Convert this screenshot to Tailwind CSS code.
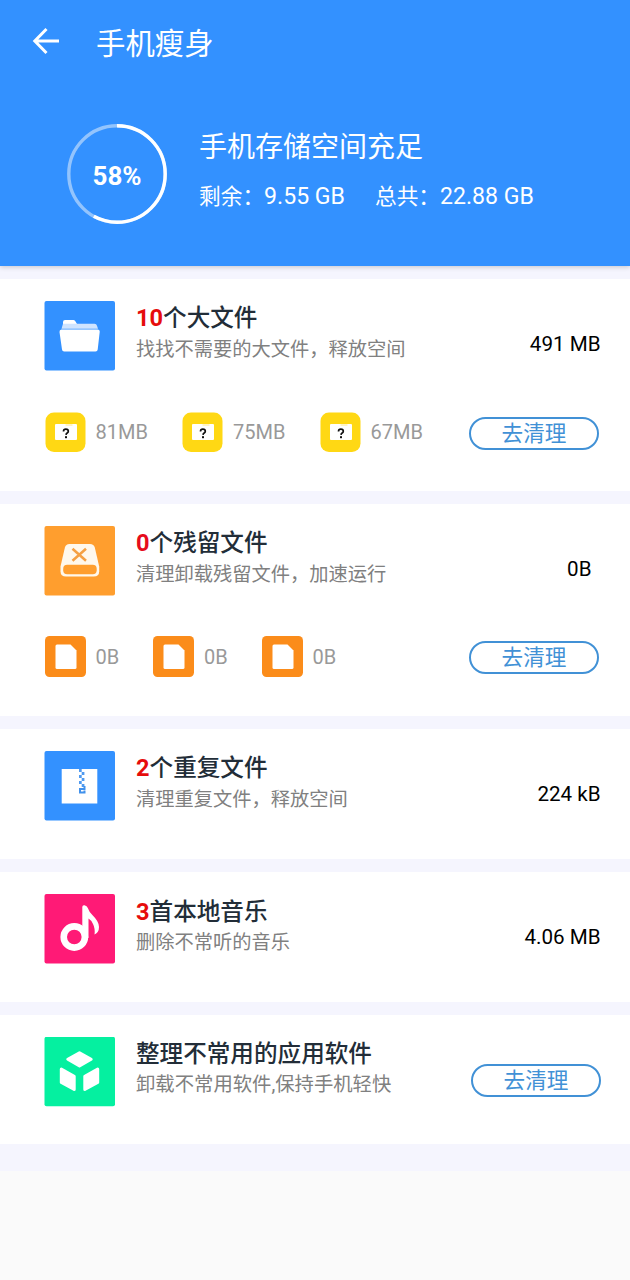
<!DOCTYPE html>
<html lang="zh-CN">
<head>
<meta charset="utf-8">
<meta name="viewport" content="width=device-width, initial-scale=1">
<title>手机瘦身</title>
<script src="https://cdn.jsdelivr.net/npm/@tailwindcss/browser@4"></script>
</head>
<body class="bg-[#fafafa] font-['Roboto','Noto_Sans_CJK_SC',sans-serif] text-black">
<svg class="hidden">
  <symbol id="unknown" viewBox="0 0 41 40">
    <rect x=".5" y=".5" width="40" height="39.500" rx="8.500" fill="#ffd814"/>
    <path d="M10 13q0-1 1-1h20q1 0 1 1V27q0 1-1 1H11q-1 0-1-1z" fill="#fff"/>
    <path d="M20.500 13h7" stroke="#ffe98a" stroke-width="1"/>
    <path d="M18.500 19.400q0-2.300 2.400-2.300t2.400 2.100q0 1.100-1.100 1.800t-1.200 1.900" fill="none" stroke="#111" stroke-width="1.700"/>
    <rect x="20" y="24.200" width="2" height="2" fill="#111"/>
  </symbol>
  <symbol id="doc" viewBox="0 0 41 41">
    <rect width="41" height="41" rx="4.500" fill="#fb8c1a"/>
    <path d="M10.500 10q0-1.500 1.500-1.500h13.500l6 6V31.500q0 1.500-1.500 1.500H12q-1.500 0-1.500-1.500z" fill="#fff"/>
  </symbol>
</svg>

<header class="relative flex h-[266px] flex-col bg-[#3391ff] text-white shadow-[0_1px_5px_rgba(0,0,0,0.2)]">
  <div class="flex h-[84px] items-center pl-8">
    <svg class="h-7 w-7 -translate-y-px" viewBox="0 0 28 28" fill="none" stroke="#fff" stroke-width="3"><path d="M27 14H3M14.500 2L2.800 14l11.700 12"/></svg>
    <h1 class="pl-9 pt-[3px] text-[29.400px] leading-[40px]">手机瘦身</h1>
  </div>
  <div class="flex pl-[67px] pt-10">
    <div class="relative flex h-[100px] w-[100px] items-center justify-center">
      <svg class="absolute inset-0" viewBox="0 0 100 100" fill="none" stroke-width="3.400">
        <circle cx="50" cy="50" r="48.200" stroke="#93c4fd"/>
        <circle cx="50" cy="50" r="48.200" stroke="#fff" pathLength="100" stroke-dasharray="58 42" transform="rotate(-90 50 50)"/>
      </svg>
      <span class="pt-[5px] text-[26px] font-bold">58%</span>
    </div>
    <div class="pl-8">
      <p class="pt-1 text-[28px] leading-[40px]">手机存储空间充足</p>
      <p class="flex gap-[30px] pt-[13px] text-[23.100px] leading-[32px]"><span><span class="text-[21.700px]">剩余：</span>9.55 GB</span><span><span class="text-[21.700px]">总共：</span>22.88 GB</span></p>
    </div>
  </div>
</header>

<main class="flex h-[905px] flex-col gap-[13px] bg-[#f5f5fe] pt-[13px]">
  <section class="h-[212px] bg-white pl-11 pt-[22px]">
    <div class="flex h-[70px]">
      <svg class="h-[70px] w-[71px]" viewBox="0 0 71 70"><rect x=".5" width="70.500" height="69.500" rx="2" fill="#3391ff"/><path d="M19 24v-3q0-2 2-2h8.500q1.500 0 2 1.500L33 23z" fill="#fff"/><path d="M19 22.800h31.500q2 0 2.500 2l1 3H17.500z" fill="#cfe4ff"/><path d="M17.500 28.500h36q2.500 0 2.200 2.500L53.700 48.500q-.2 2-2.200 2H20.200q-2 0-2.200-2L15.500 31Q15.300 28.500 17.500 28.500z" fill="#fff"/></svg>
      <div class="grow pl-[21px] pt-0.5">
        <h2 class="text-[23.600px] font-medium leading-[30px] text-[#222d38]"><b class="text-[#e60c0c]">10</b>个大文件</h2>
        <p class="pt-0.5 text-[19.250px] leading-[30px] text-[#808080]">找找不需要的大文件，释放空间</p>
      </div>
      <span class="pr-[29.500px] pt-[27px] text-[20.600px] leading-[32px]">491 MB</span>
    </div>
    <div class="mt-[41px] flex h-[40px] items-center text-[20px] text-[#999]">
      <div class="flex w-[137.500px] items-center gap-[10px]"><svg class="ml-[.5px] h-10 w-[41px]"><use href="#unknown"/></svg>81MB</div>
      <div class="flex w-[137.500px] items-center gap-[10px]"><svg class="ml-[.5px] h-10 w-[41px]"><use href="#unknown"/></svg>75MB</div>
      <div class="flex w-[137.500px] items-center gap-[10px]"><svg class="ml-[.5px] h-10 w-[41px]"><use href="#unknown"/></svg>67MB</div>
      <button class="ml-[12.500px] mt-0.5 h-[33px] w-[130px] rounded-full border-2 border-[#4191d6] pt-px text-[21.600px] leading-[28px] text-[#4191d6]">去清理</button>
    </div>
  </section>

  <section class="h-[212px] bg-white pl-11 pt-[22px]">
    <div class="flex h-[70px]">
      <svg class="h-[70px] w-[71px]" viewBox="0 0 71 70"><rect x=".5" width="70.500" height="69.500" rx="2" fill="#ff9e2e"/><path d="M25.500 18h20.500q3.800 0 4.800 3.500l4.400 19v4.700q0 5.300-5.500 5.300H22q-5.500 0-5.500-5.300v-4.700l4.400-19Q21.800 18 25.500 18z" fill="#fff8ec"/><rect x="19.200" y="38.800" width="33.500" height="9.400" rx="4" fill="#ff9e2e"/><path d="M28.500 22.800l13.500 12M42 22.800l-13.500 12" stroke="#f5a043" stroke-width="2.500"/></svg>
      <div class="grow pl-[21px] pt-0.5">
        <h2 class="text-[23.600px] font-medium leading-[30px] text-[#222d38]"><b class="text-[#e60c1c]">0</b>个残留文件</h2>
        <p class="pt-0.5 text-[19.250px] leading-[30px] text-[#808080]">清理卸载残留文件，加速运行</p>
      </div>
      <span class="pr-[38.500px] pt-[27px] text-[20.600px] leading-[32px]">0B</span>
    </div>
    <div class="mt-[40px] flex h-[41px] items-center text-[20px] text-[#999]">
      <div class="flex w-[108.500px] items-center gap-[10px]"><svg class="ml-[.5px] h-[41px] w-[41px]"><use href="#doc"/></svg>0B</div>
      <div class="flex w-[108.500px] items-center gap-[10px]"><svg class="ml-[.5px] h-[41px] w-[41px]"><use href="#doc"/></svg>0B</div>
      <div class="flex w-[108.500px] items-center gap-[10px]"><svg class="ml-[.5px] h-[41px] w-[41px]"><use href="#doc"/></svg>0B</div>
      <button class="ml-[99.500px] mt-0.5 h-[33px] w-[130px] rounded-full border-2 border-[#4191d6] pt-px text-[21.600px] leading-[28px] text-[#4191d6]">去清理</button>
    </div>
  </section>

  <section class="flex h-[129.500px] bg-white pl-11 pt-[22px]">
    <svg class="h-[70px] w-[71px]" viewBox="0 0 71 70"><rect x=".5" width="70.500" height="69.500" rx="2" fill="#3391ff"/><path d="M17.700 18h35.600v34.500H17.700z" fill="#fff"/><path d="M35 18h2.700v3H35zM37.700 21h2.700v3h-2.700zM35 24h2.700v3H35zM37.700 27h2.700v3h-2.700zM35 30h2.700v3H35zM37.700 33h2.700v3h-2.700z" fill="#4f9af0"/><path d="M36 42.500v-4.500h4.500v-3M35 41.500h5.500v-2" fill="none" stroke="#4191ec" stroke-width="2"/></svg>
    <div class="grow pl-[21px] pt-0.5">
      <h2 class="text-[23.600px] font-medium leading-[30px] text-[#222d38]"><b class="text-[#e60c0c]">2</b>个重复文件</h2>
      <p class="pt-0.5 text-[19.250px] leading-[30px] text-[#808080]">清理重复文件，释放空间</p>
    </div>
    <span class="pr-[29.500px] pt-[27px] text-[20.600px] leading-[32px]">224 kB</span>
  </section>

  <section class="flex h-[130px] bg-white pl-11 pt-[22px]">
    <svg class="h-[70px] w-[71px]" viewBox="0 0 71 70"><rect x=".5" width="70.500" height="69.500" rx="2" fill="#ff1a76"/><circle cx="30.300" cy="43" r="10.600" fill="none" stroke="#fff" stroke-width="6.600"/><path d="M38.300 43V13q0-2 2.200-1.700 2.500.4 3.300 2.700 1 3.500 5 7.500Q55 27.500 55 33q0 5.500-4.500 7.500.8-6-1.500-10.500-1.800-4-4.500-5.500V44z" fill="#fff"/></svg>
    <div class="grow pl-[21px] pt-[3px]">
      <h2 class="text-[23.600px] font-medium leading-[30px] text-[#222d38]"><b class="text-[#e60c0c]">3</b>首本地音乐</h2>
      <p class="pt-px text-[19.250px] leading-[30px] text-[#808080]">删除不常听的音乐</p>
    </div>
    <span class="pr-[29.500px] pt-[27px] text-[20.600px] leading-[32px]">4.06 MB</span>
  </section>

  <section class="flex h-[129.500px] bg-white pl-11 pt-[22px]">
    <svg class="h-[70px] w-[71px]" viewBox="0 0 71 70"><rect x=".5" y="-.2" width="70.500" height="69.500" rx="2" fill="#05f0a0"/><g fill="#fff" stroke="#fff" stroke-width="3" stroke-linejoin="round"><path d="M35.500 15.700l11.700 6.600L35.500 29 23.800 22.300zM17.300 32l12.900 7.200v13.300L17.300 45.500zM53.700 32l-12.900 7.200v13.300L53.700 45.500z"/></g></svg>
    <div class="grow pl-[21px] pt-0.5">
      <h2 class="text-[23.600px] font-medium leading-[30px] text-[#222d38]">整理不常用的应用软件</h2>
      <p class="pt-px text-[19.350px] leading-[30px] text-[#808080]">卸载不常用软件,保持手机轻快</p>
    </div>
    <button class="mr-[29px] mt-[27px] h-[33px] w-[130px] rounded-full border-2 border-[#4191d6] pt-px text-[21.600px] leading-[28px] text-[#4191d6]">去清理</button>
  </section>
</main>
</body>
</html>
